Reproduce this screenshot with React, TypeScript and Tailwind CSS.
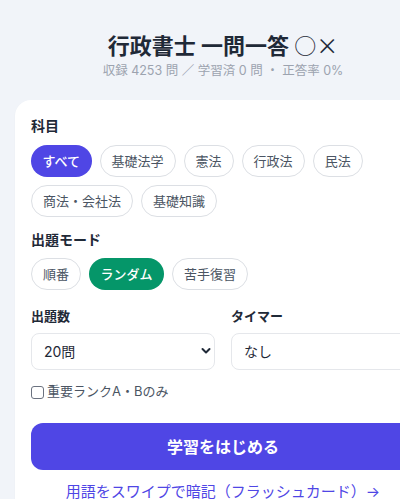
import React from "react";

const font = { fontFamily: '"Inter", "Noto Sans CJK JP", sans-serif' };

function Chip({ label, active, color }: { label: string; active?: boolean; color?: "indigo" | "green" }) {
  if (active) {
    return (
      <span
        className={
          "inline-flex items-center h-8 px-[11.5px] rounded-full text-[13px] leading-5 text-white font-medium " +
          (color === "green" ? "bg-[#059669]" : "bg-[#4f46e5]")
        }
      >
        {label}
      </span>
    );
  }
  return (
    <span className="inline-flex items-center h-8 px-[11px] rounded-full border border-[#dcdfe4] bg-white text-[13px] leading-5 text-[#4b5563]">
      {label}
    </span>
  );
}

export default function App() {
  return (
    <div className="min-h-screen w-full overflow-hidden bg-[#f1f4f9]" style={font}>
      <div className="w-[416px] ml-[15px] pt-[29px]">
        <h1 className="h-[30px] text-center text-[22px] leading-[30px] font-bold text-[#1f2937]">
          行政書士 一問一答{" "}
          <span className="font-normal" style={{ fontFamily: '"Noto Sans CJK JP", sans-serif' }}>
            ○×
          </span>
        </h1>
        <p className="mt-[3px] text-center text-[12.5px] leading-[18px] text-[#9ca3af]">
          収録 4253 問 ／ 学習済 0 問 ・ 正答率 0%
        </p>
        <div className="mt-[20px] bg-white rounded-2xl p-4 shadow-[0_1px_2px_rgba(0,0,0,0.04)]">
          <div className="text-[14px] leading-5 font-bold text-[#1f2937]">科目</div>
          <div className="mt-[9px] flex flex-wrap gap-2">
            <Chip label="すべて" active color="indigo" />
            <Chip label="基礎法学" />
            <Chip label="憲法" />
            <Chip label="行政法" />
            <Chip label="民法" />
            <Chip label="商法・会社法" />
            <Chip label="基礎知識" />
          </div>
          <div className="mt-[13px] text-[14px] leading-5 font-bold text-[#1f2937]">出題モード</div>
          <div className="mt-2 flex flex-wrap gap-2">
            <Chip label="順番" />
            <Chip label="ランダム" active color="green" />
            <Chip label="苦手復習" />
          </div>
          <div className="mt-4 grid grid-cols-2 gap-4">
            <div>
              <div className="text-[13px] leading-5 font-bold text-[#1f2937]">出題数</div>
              <div className="relative mt-[7px]">
                <select
                  className="appearance-none w-full h-[37px] rounded-lg border border-[#e5e7eb] bg-white pl-3 text-[14px] text-[#1f2937] outline-none"
                  style={font}
                  defaultValue="20"
                >
                  <option value="20">20問</option>
                </select>
                <svg
                  className="pointer-events-none absolute right-[4px] top-[14px]"
                  width="10"
                  height="8"
                  viewBox="0 0 10 8"
                >
                  <path d="M1.5 2 L5 5.5 L8.5 2" fill="none" stroke="#1f2937" strokeWidth="2" strokeLinecap="round" strokeLinejoin="round" />
                </svg>
              </div>
            </div>
            <div>
              <div className="text-[13px] leading-5 font-bold text-[#1f2937]">タイマー</div>
              <div className="relative mt-[7px]">
                <select
                  className="appearance-none w-full h-[37px] rounded-lg border border-[#e5e7eb] bg-white pl-3 text-[14px] text-[#1f2937] outline-none"
                  style={font}
                  defaultValue="none"
                >
                  <option value="none">なし</option>
                </select>
              </div>
            </div>
          </div>
          <label className="mt-3 flex items-center gap-[3px] h-5 text-[13px] text-[#4b5563]">
            <span className="inline-block w-[13px] h-[13px] rounded-[3px] border border-[#6b7280] bg-white" />
            <span>重要ランクA・Bのみ</span>
          </label>
          <button className="mt-[21px] w-full h-[47px] rounded-xl bg-[#4f46e5] text-white text-[16px] font-bold" style={font}>
            学習をはじめる
          </button>
          <div className="mt-3 text-center text-[15px] leading-5 text-[#4f46e5]">
            用語をスワイプで暗記（フラッシュカード）→
          </div>
        </div>
      </div>
    </div>
  );
}
